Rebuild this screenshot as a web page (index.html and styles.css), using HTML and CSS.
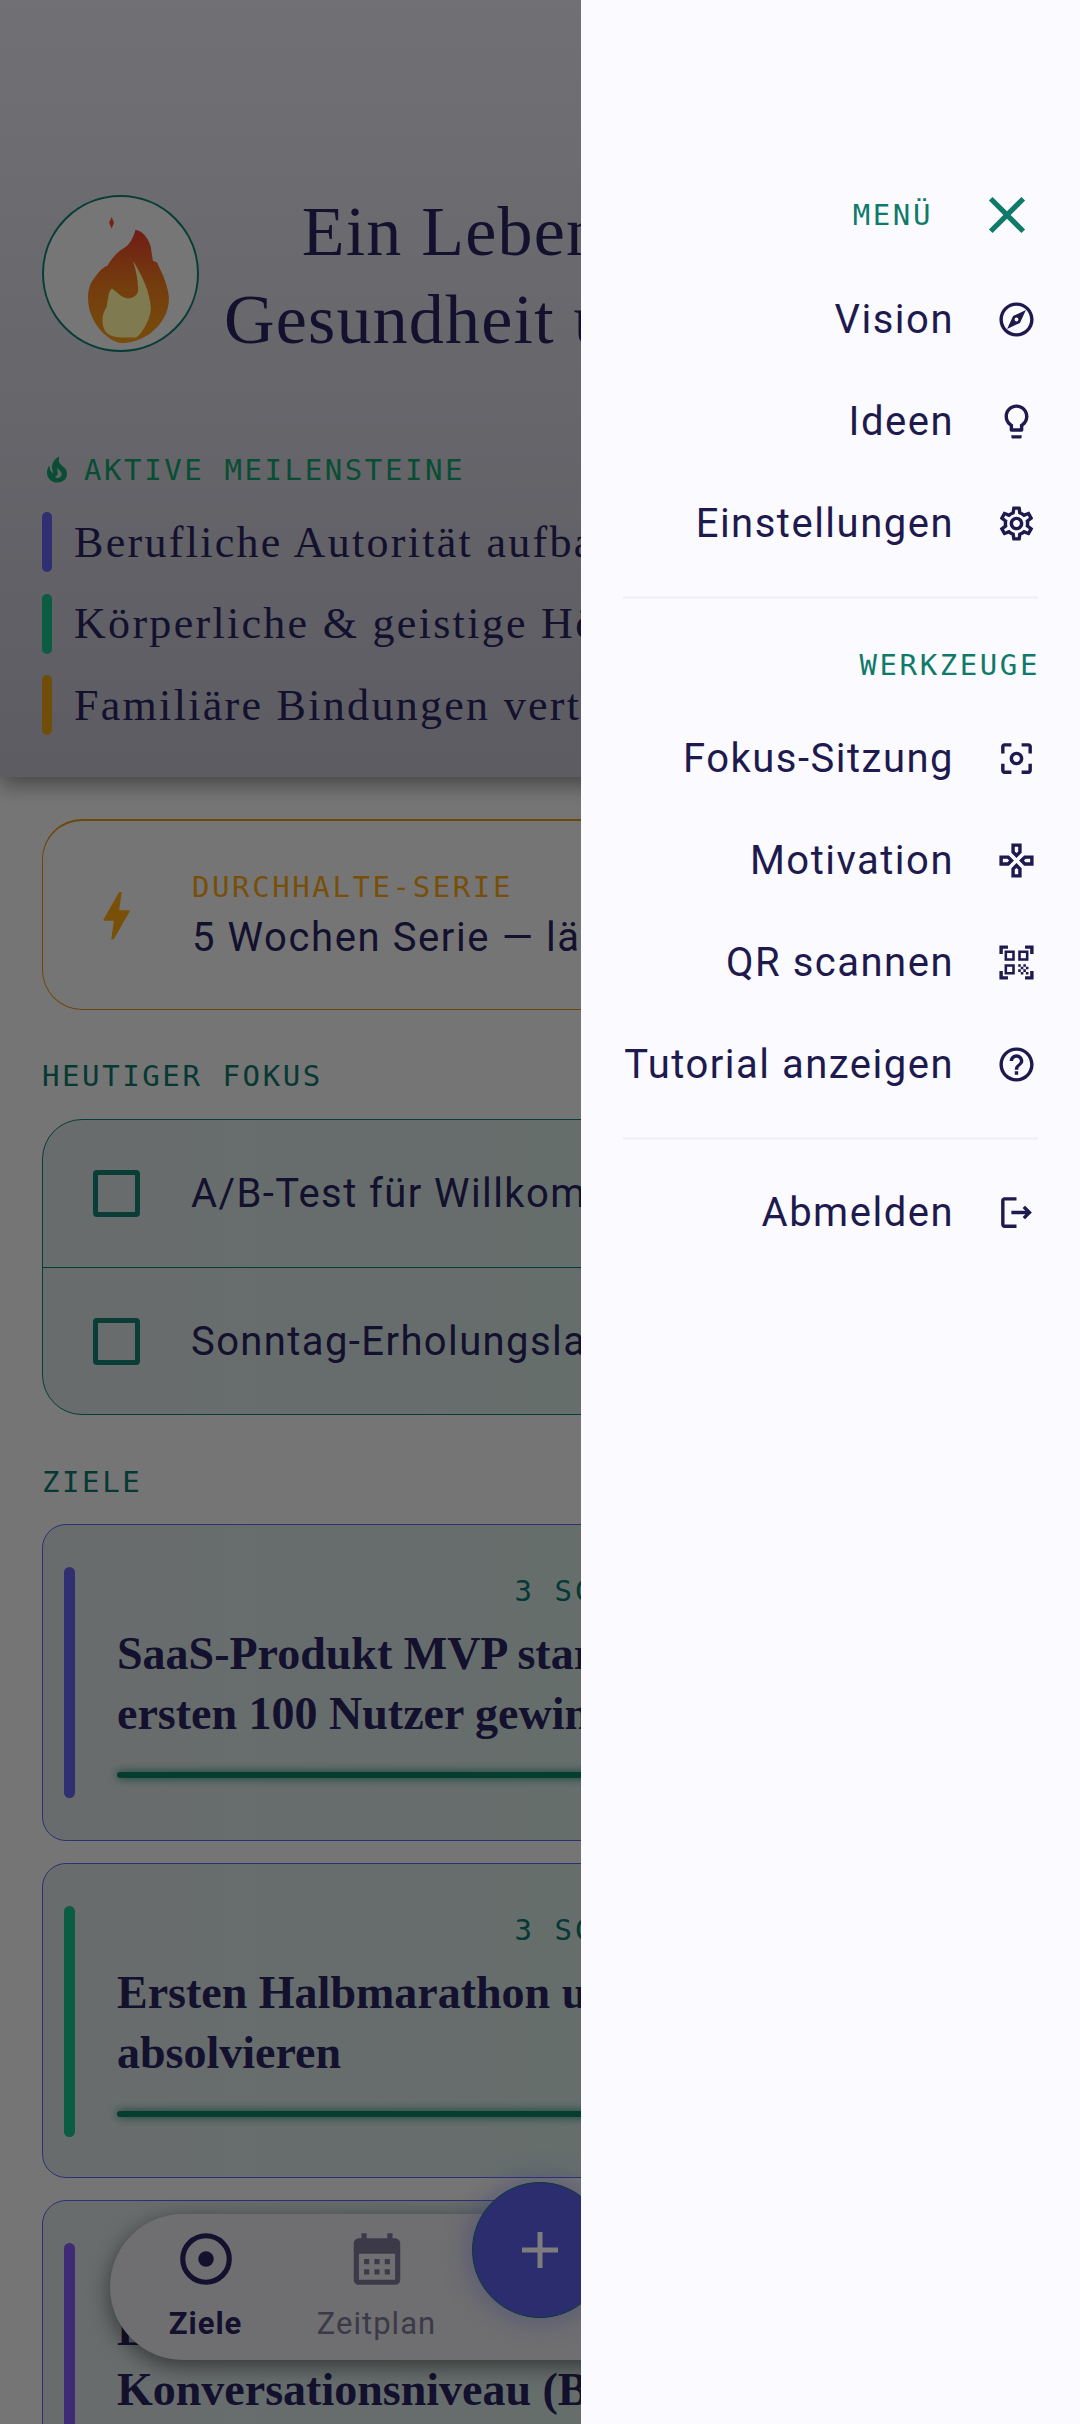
FILE: index.html
```html
<!DOCTYPE html>
<html lang="de">
<head>
  <meta charset="UTF-8">
  <title>Ziele</title>
  <link rel="stylesheet" href="styles.css">
</head>
<body>
  <div class="app">
    <div class="page">
      <header class="hero">
        <div class="hero__top">
          <div class="hero__avatar">
            <svg viewBox="38 45 468 468" width="100%" height="100%">
              <defs>
                <linearGradient id="flame" x1="0" y1="0" x2="0" y2="1">
                  <stop offset="0" stop-color="#e03c2c"/>
                  <stop offset="0.5" stop-color="#e87a1c"/>
                  <stop offset="1" stop-color="#f09a18"/>
                </linearGradient>
              </defs>
              <path fill="#e8482c" d="M245 106l7 18-7 18-8-18z"/>
              <path fill="url(#flame)" d="M318 145c20 3 38 24 46 50l7 45 13 5c10 25 30 55 36 105c2 45-20 85-60 115c-30 18-65 32-95 25c-40-12-75-55-88-100c-6-30-8-65 10-90c12-18 28-40 45-45c12-20 28-40 45-50c15-10 30-20 41-60z"/>
              <path fill="#fff4a0" d="M310 240c8 25 14 50 16 85c2 20-15 30-32 30c-18-2-28-15-48-30c-10 5-12 30-16 55c-12 20-20 45-5 75c10 15 30 20 60 20h35c20-15 40-50 45-85c-1-55-30-110-55-150z"/>
            </svg>
          </div>
          <h1 class="hero__title">Ein Leben voller Mut<br>Gesundheit und Wohlstand</h1>
        </div>
        <div class="hero__label">
          <svg class="hero__fire" viewBox="0 0 24 24"><path d="M19.48 12.35c-1.57-4.08-7.16-4.3-5.81-10.23.1-.44-.37-.78-.75-.55C9.29 3.71 6.68 8 8.87 13.62c.18.46-.36.89-.75.59-1.81-1.37-2-3.34-1.84-4.75.06-.52-.62-.77-.91-.34C4.69 10.16 4 11.84 4 14.37c.38 5.6 5.11 7.32 6.81 7.54 2.43.31 5.06-.14 6.95-1.87 2.08-1.93 2.84-5.01 1.72-7.69zm-9.28 5.03c1.44-.35 2.18-1.39 2.38-2.31.33-1.43-.96-2.83-.09-5.09.33 1.87 3.27 3.04 3.27 5.08.08 2.53-2.66 4.7-5.56 2.32z"/></svg>
          <span class="mono">AKTIVE MEILENSTEINE</span>
        </div>
        <ul class="hero__list">
          <li class="hero__item"><span class="hero__bar hero__bar--indigo"></span>Berufliche Autorität aufbauen</li>
          <li class="hero__item"><span class="hero__bar hero__bar--green"></span>Körperliche &amp; geistige Höchstform</li>
          <li class="hero__item"><span class="hero__bar hero__bar--amber"></span>Familiäre Bindungen vertiefen</li>
        </ul>
      </header>

      <main class="content">
        <section class="streak">
          <svg class="streak__icon" viewBox="0 0 24 24"><path d="M11 21h-1l1-7H7.5c-.58 0-.57-.32-.38-.66.19-.34.05-.08.07-.12C8.48 10.94 10.42 7.54 13 3h1l-1 7h3.5c.49 0 .56.33.47.51l-.07.15C12.96 17.55 11 21 11 21z"/></svg>
          <div class="streak__body">
            <div class="streak__label mono">DURCHHALTE-SERIE</div>
            <div class="streak__text">5 Wochen Serie — lässt sich sehen</div>
          </div>
        </section>

        <h2 class="section-label section-label--focus mono">HEUTIGER FOKUS</h2>
        <section class="focus">
          <div class="focus__row"><span class="focus__box"></span>A/B-Test für Willkommensseite</div>
          <div class="focus__row"><span class="focus__box"></span>Sonntag-Erholungslauf planen</div>
        </section>

        <h2 class="section-label section-label--goals mono">ZIELE</h2>
        <article class="goal goal--indigo">
          <span class="goal__bar"></span>
          <div class="goal__body">
            <div class="goal__meta mono">3 SCHRITTE · NOCH 2 OFFEN</div>
            <h3 class="goal__title">SaaS-Produkt MVP starten und<br>ersten 100 Nutzer gewinnen</h3>
            <div class="goal__progress"></div>
          </div>
        </article>
        <article class="goal goal--green goal--short">
          <span class="goal__bar"></span>
          <div class="goal__body">
            <div class="goal__meta mono">3 SCHRITTE · NOCH 2 OFFEN</div>
            <h3 class="goal__title">Ersten Halbmarathon unter 2h<br>absolvieren</h3>
            <div class="goal__progress"></div>
          </div>
        </article>
        <article class="goal goal--purple">
          <span class="goal__bar"></span>
          <div class="goal__body">
            <div class="goal__meta mono">3 SCHRITTE · NOCH 2 OFFEN</div>
            <h3 class="goal__title">Englisch auf<br>Konversationsniveau (B2)</h3>
          </div>
        </article>
      </main>
    </div>

    <nav class="tabbar">
      <div class="tabbar__item tabbar__item--active">
        <svg class="tabbar__icon" viewBox="0 0 24 24"><circle cx="12" cy="12" r="9" fill="none" stroke="currentColor" stroke-width="2"/><circle cx="12" cy="12" r="3" fill="currentColor"/></svg>
        <span>Ziele</span>
      </div>
      <div class="tabbar__item">
        <svg class="tabbar__icon" viewBox="0 0 24 24"><path fill="currentColor" d="M19 4h-1V2h-2v2H8V2H6v2H5c-1.1 0-1.99.9-1.99 2L3 20c0 1.1.89 2 2 2h14c1.1 0 2-.9 2-2V6c0-1.1-.9-2-2-2zm0 16H5V10h14v10zM9 14H7v-2h2v2zm4 0h-2v-2h2v2zm4 0h-2v-2h2v2zm-8 4H7v-2h2v2zm4 0h-2v-2h2v2zm4 0h-2v-2h2v2z"/></svg>
        <span>Zeitplan</span>
      </div>
    </nav>
    <button class="fab" aria-label="Neu">
      <svg viewBox="0 0 36 36" width="36" height="36"><path d="M15.5 0h5v15.5H36v5H20.500V36h-5V20.500H0v-5h15.500z" fill="currentColor"/></svg>
    </button>

    <div class="scrim"></div>

    <aside class="drawer">
      <div class="drawer__head">
        <span class="drawer__label mono">MENÜ</span>
        <svg class="drawer__close" viewBox="0 0 24 24"><path d="M19 6.41L17.59 5 12 10.59 6.41 5 5 6.41 10.59 12 5 17.59 6.41 19 12 13.41 17.59 19 19 17.59 13.41 12z"/></svg>
      </div>
      <a class="drawer__item">Vision
        <svg viewBox="0 0 24 24"><path d="M12 2C6.48 2 2 6.48 2 12s4.48 10 10 10 10-4.48 10-10S17.52 2 12 2zm0 18c-4.41 0-8-3.59-8-8s3.59-8 8-8 8 3.59 8 8-3.59 8-8 8zm-5.500-2.500l7.510-3.490L17.500 6.500 9.990 9.990 6.500 17.500zm5.500-6.600c.61 0 1.100.49 1.100 1.100s-.49 1.100-1.100 1.100-1.100-.49-1.100-1.100.49-1.100 1.100-1.100z"/></svg>
      </a>
      <a class="drawer__item">Ideen
        <svg viewBox="0 0 24 24"><path d="M9 21c0 .55.45 1 1 1h4c.55 0 1-.45 1-1v-1H9v1zm3-19C8.140 2 5 5.140 5 9c0 2.380 1.190 4.470 3 5.740V17c0 .55.45 1 1 1h6c.55 0 1-.45 1-1v-2.260c1.810-1.270 3-3.360 3-5.740 0-3.860-3.140-7-7-7zm2.850 11.100l-.85.6V16h-4v-2.300l-.85-.6C7.800 12.160 7 10.630 7 9c0-2.760 2.240-5 5-5s5 2.240 5 5c0 1.630-.8 3.160-2.150 4.100z"/></svg>
      </a>
      <a class="drawer__item">Einstellungen
        <svg viewBox="0 0 24 24"><path d="M19.43 12.98c.04-.32.07-.64.07-.98 0-.34-.03-.66-.07-.98l2.110-1.650c.19-.15.24-.42.12-.64l-2-3.460c-.09-.16-.26-.25-.44-.25-.06 0-.12.01-.17.03l-2.490 1c-.52-.4-1.080-.73-1.690-.98l-.38-2.650C14.460 2.180 14.250 2 14 2h-4c-.25 0-.46.18-.49.42l-.38 2.650c-.61.25-1.170.59-1.690.98l-2.490-1c-.06-.02-.12-.03-.18-.03-.17 0-.34.09-.43.25l-2 3.460c-.13.22-.07.49.12.64l2.110 1.650c-.04.32-.07.65-.07.98 0 .33.03.66.07.98l-2.110 1.650c-.19.15-.24.42-.12.64l2 3.460c.09.16.26.25.44.25.06 0 .12-.01.17-.03l2.490-1c.52.4 1.080.73 1.690.98l.38 2.650c.03.24.24.42.49.42h4c.25 0 .46-.18.49-.42l.38-2.650c.61-.25 1.170-.59 1.690-.98l2.490 1c.06.02.12.03.18.03.17 0 .34-.09.43-.25l2-3.460c.12-.22.07-.49-.12-.64l-2.110-1.650zm-1.980-1.710c.04.31.05.52.05.73 0 .21-.02.43-.05.73l-.14 1.130.89.7 1.080.84-.7 1.210-1.270-.51-1.040-.42-.9.68c-.43.32-.84.56-1.250.73l-1.060.43-.16 1.130-.2 1.350h-1.400l-.19-1.350-.16-1.130-1.060-.43c-.43-.18-.83-.41-1.230-.71l-.91-.7-1.060.43-1.270.51-.7-1.210 1.080-.84.89-.7-.14-1.130c-.03-.31-.05-.54-.05-.74s.02-.43.05-.73l.14-1.130-.89-.7-1.080-.84.7-1.210 1.270.51 1.040.42.9-.68c.43-.32.84-.56 1.250-.73l1.060-.43.16-1.130.2-1.350h1.390l.19 1.350.16 1.130 1.060.43c.43.18.83.41 1.230.71l.91.7 1.060-.43 1.270-.51.7 1.210-1.070.85-.89.7.14 1.130zM12 8c-2.210 0-4 1.790-4 4s1.790 4 4 4 4-1.790 4-4-1.790-4-4-4zm0 6c-1.100 0-2-.9-2-2s.9-2 2-2 2 .9 2 2-.9 2-2 2z"/></svg>
      </a>
      <hr class="drawer__rule">
      <div class="drawer__section mono">WERKZEUGE</div>
      <a class="drawer__item">Fokus-Sitzung
        <svg viewBox="0 0 24 24"><path d="M5 15H3v4c0 1.100.9 2 2 2h4v-2H5v-4zM5 5h4V3H5c-1.100 0-2 .9-2 2v4h2V5zm14-2h-4v2h4v4h2V5c0-1.100-.9-2-2-2zm0 16h-4v2h4c1.100 0 2-.9 2-2v-4h-2v4zM12 8c-2.210 0-4 1.790-4 4s1.790 4 4 4 4-1.790 4-4-1.790-4-4-4zm0 6c-1.100 0-2-.9-2-2s.9-2 2-2 2 .9 2 2-.9 2-2 2z"/></svg>
      </a>
      <a class="drawer__item">Motivation
        <svg viewBox="0 0 24 24"><path d="M13 4v2.670l-1 1-1-1V4h2m7 7v2h-2.670l-1-1 1-1H20M6.670 11l1 1-1 1H4v-2h2.670M12 16.330l1 1V20h-2v-2.670l1-1M15 2H9v5.500l3 3 3-3V2zm7 7h-5.500l-3 3 3 3H22V9zM7.500 9H2v6h5.500l3-3-3-3zm4.500 4.500l-3 3V22h6v-5.500l-3-3z"/></svg>
      </a>
      <a class="drawer__item">QR scannen
        <svg viewBox="0 0 24 24"><path d="M9.500 6.500v3h-3v-3h3M11 5H5v6h6V5zm-1.500 9.500v3h-3v-3h3M11 13H5v6h6v-6zm6.500-6.500v3h-3v-3h3M19 5h-6v6h6V5zm-6 8h1.500v1.500H13V13zm1.500 1.500H16V16h-1.500v-1.500zM16 13h1.500v1.500H16V13zm-3 3h1.500v1.500H13V16zm1.500 1.500H16V19h-1.500v-1.500zM16 16h1.500v1.500H16V16zm1.500-1.500H19V16h-1.500v-1.500zm0 3H19V19h-1.500v-1.500zM22 7h-2V4h-3V2h5v5zm0 15v-5h-2v3h-3v2h5zM2 22h5v-2H4v-3H2v5zM2 2v5h2V4h3V2H2z"/></svg>
      </a>
      <a class="drawer__item">Tutorial anzeigen
        <svg viewBox="0 0 24 24"><path d="M11 18h2v-2h-2v2zm1-16C6.480 2 2 6.480 2 12s4.480 10 10 10 10-4.480 10-10S17.520 2 12 2zm0 18c-4.410 0-8-3.590-8-8s3.590-8 8-8 8 3.590 8 8-3.590 8-8 8zm0-14c-2.210 0-4 1.790-4 4h2c0-1.100.9-2 2-2s2 .9 2 2c0 2-3 1.750-3 5h2c0-2.250 3-2.500 3-5 0-2.210-1.790-4-4-4z"/></svg>
      </a>
      <hr class="drawer__rule">
      <a class="drawer__item">Abmelden
        <svg viewBox="0 0 24 24"><path d="M17 8l-1.410 1.410L17.170 11H9v2h8.170l-1.580 1.580L17 16l4-4-4-4zM5 5h7V3H5c-1.100 0-2 .9-2 2v14c0 1.100.9 2 2 2h7v-2H5V5z"/></svg>
      </a>
    </aside>
  </div>
</body>
</html>
```
FILE: styles.css
```css
* {
  box-sizing: border-box;
}

body {
  margin: 0;
  font-family: Roboto, sans-serif;
  color: #28225c;
}

h1, h2, h3, ul {
  margin: 0;
  padding: 0;
}

.mono {
  font-family: "DejaVu Sans Mono", monospace;
  font-size: 29px;
  font-weight: 400;
  letter-spacing: 2.6px;
  white-space: nowrap;
}

.app {
  position: relative;
  width: 1080px;
  height: 2424px;
  overflow: hidden;
  background: #ebebeb;
}

/* Header */
.hero {
  height: 777px;
  padding: 195px 42px 0;
  background: linear-gradient(to bottom, #e2e2ea, #b8b8c4);
  box-shadow: 0 8px 20px rgba(0, 0, 0, 0.4);
}

.hero__top {
  display: flex;
  align-items: flex-start;
  gap: 23px;
}

.hero__avatar {
  flex: none;
  width: 157px;
  height: 157px;
  border: 2px solid #0f7a6a;
  border-radius: 50%;
  background: #ececec;
  overflow: hidden;
}

.hero__title {
  flex: 1;
  margin-top: -7px;
  padding-right: 28px;
  font-family: "Liberation Serif", serif;
  font-size: 70px;
  font-weight: 400;
  line-height: 88px;
  letter-spacing: 1.2px;
  text-align: center;
  white-space: nowrap;
}

.hero__label {
  display: flex;
  align-items: center;
  gap: 12px;
  height: 40px;
  margin-top: 86px;
  color: #109a68;
}

.hero__fire {
  width: 30px;
  height: 30px;
  fill: currentColor;
}

.hero__list {
  display: flex;
  flex-direction: column;
  gap: 21.5px;
  margin-top: 22px;
  list-style: none;
}

.hero__item {
  display: flex;
  align-items: center;
  gap: 22px;
  height: 60px;
  font-family: "Liberation Serif", serif;
  font-size: 44px;
  letter-spacing: 2.3px;
  white-space: nowrap;
}

.hero__bar {
  width: 10px;
  height: 60px;
  border-radius: 5px;
}

.hero__bar--indigo {
  background: #5e5ee4;
}

.hero__bar--green {
  background: #14b884;
}

.hero__bar--amber {
  background: #e09a10;
}

/* Content */
.content {
  padding: 42px 42px 0;
}

.streak {
  display: flex;
  align-items: center;
  gap: 44px;
  height: 191px;
  padding-left: 42px;
  border: 1px solid #d88f10;
  border-top-width: 2px;
  border-radius: 40px;
}

.streak__icon {
  flex: none;
  width: 63px;
  height: 63px;
  fill: #f0a010;
}

.streak__body {
  padding-top: 4px;
}

.streak__label {
  line-height: 38px;
  color: #ee9f12;
}

.streak__text {
  margin-top: 4px;
  font-size: 40px;
  line-height: 56px;
  letter-spacing: 1.6px;
  white-space: nowrap;
}

.section-label {
  height: 40px;
  line-height: 40px;
  color: #0d7068;
}

.section-label--focus {
  margin: 46px 0 23px;
}

.section-label--goals {
  margin: 47px 0 22px;
}

.focus {
  height: 296px;
  border: 1.5px solid #0f7a6a;
  border-radius: 40px;
  background: linear-gradient(to right, #d2d8da, #c6e0d8);
}

.focus__row {
  display: flex;
  align-items: center;
  gap: 51px;
  height: 50%;
  padding-left: 50px;
  font-size: 40px;
  letter-spacing: 1.4px;
  white-space: nowrap;
}

.focus__row + .focus__row {
  border-top: 1.5px solid #0f7a6a;
}

.focus__box {
  flex: none;
  width: 47px;
  height: 47px;
  border: 5.5px solid #127a6c;
  border-radius: 4px;
}

.goal {
  display: flex;
  gap: 42px;
  height: 317px;
  margin-bottom: 22px;
  padding: 42px 21px 0 21px;
  border: 1.5px solid #5e5ee4;
  border-radius: 24px;
  background: linear-gradient(to right, #d2d8da, #c6e0d8);
}

.goal--short {
  height: 315px;
}

.goal__bar {
  flex: none;
  width: 11px;
  height: 231px;
  border-radius: 6px;
  background: #5e5ee4;
}

.goal--green .goal__bar {
  background: #14b884;
}

.goal--purple .goal__bar {
  background: #7c54ea;
}

.goal__body {
  flex: 1;
}

.goal__meta {
  height: 44px;
  line-height: 48px;
  text-align: right;
  color: #0d7068;
}

.goal__title {
  margin-top: 13px;
  font-family: "Liberation Serif", serif;
  font-size: 46px;
  font-weight: 700;
  line-height: 60px;
  white-space: nowrap;
}

.goal__progress {
  height: 6px;
  margin-top: 28px;
  border-radius: 3px;
  background: #0a7a5c;
  box-shadow: 0 0 10px #0a7a5c;
}

/* Overlays */
.tabbar {
  position: absolute;
  left: 110px;
  top: 2214px;
  display: flex;
  width: 620px;
  height: 146px;
  padding: 14px 0 0 10px;
  border-radius: 73px;
  background: #dedee2;
  box-shadow: 0 6px 22px rgba(0, 0, 0, 0.5);
}

.tabbar__item {
  display: flex;
  flex-direction: column;
  align-items: center;
  width: 171px;
  font-size: 31px;
  line-height: 68px;
  letter-spacing: 1px;
  color: #787490;
}

.tabbar__item--active {
  font-weight: 700;
  color: #28225c;
}

.tabbar__icon {
  width: 62px;
  height: 62px;
}

.fab {
  position: absolute;
  left: 472px;
  top: 2182px;
  display: flex;
  align-items: center;
  justify-content: center;
  width: 136px;
  height: 136px;
  padding: 0;
  border: 1.5px solid #0f7a6a;
  border-radius: 50%;
  background: #585adc;
  color: #fafaff;
  box-shadow: 0 0 24px 6px rgba(120, 120, 240, 0.4);
}

.scrim {
  position: absolute;
  inset: 0;
  background: rgba(0, 0, 0, 0.5);
}

.drawer {
  position: absolute;
  left: 581px;
  top: 0;
  display: flex;
  flex-direction: column;
  align-items: flex-end;
  width: 499px;
  height: 100%;
  padding: 184px 42px 0;
  background: #fbfaff;
  color: #1e1a4d;
}

.drawer__head {
  display: flex;
  align-items: center;
  gap: 43px;
  height: 62px;
  margin-bottom: 22px;
}

.drawer__label, .drawer__section {
  color: #0f7a6a;
}

.drawer__close {
  width: 62px;
  height: 62px;
  fill: #0f7a6a;
}

.drawer__item {
  display: flex;
  align-items: center;
  justify-content: flex-end;
  gap: 42px;
  height: 102px;
  padding-right: 1px;
  font-size: 40px;
  letter-spacing: 1.5px;
  white-space: nowrap;
}

.drawer__item svg {
  width: 41px;
  height: 41px;
  fill: currentColor;
}

.drawer__rule {
  width: 100%;
  height: 3px;
  margin: 22px 0 0;
  border: 0;
  background: #f2f1f8;
}

.drawer__rule + .drawer__item {
  margin-top: 21px;
}

.drawer__section {
  height: 108px;
  margin-right: -2px;
  line-height: 132px;
}
```
